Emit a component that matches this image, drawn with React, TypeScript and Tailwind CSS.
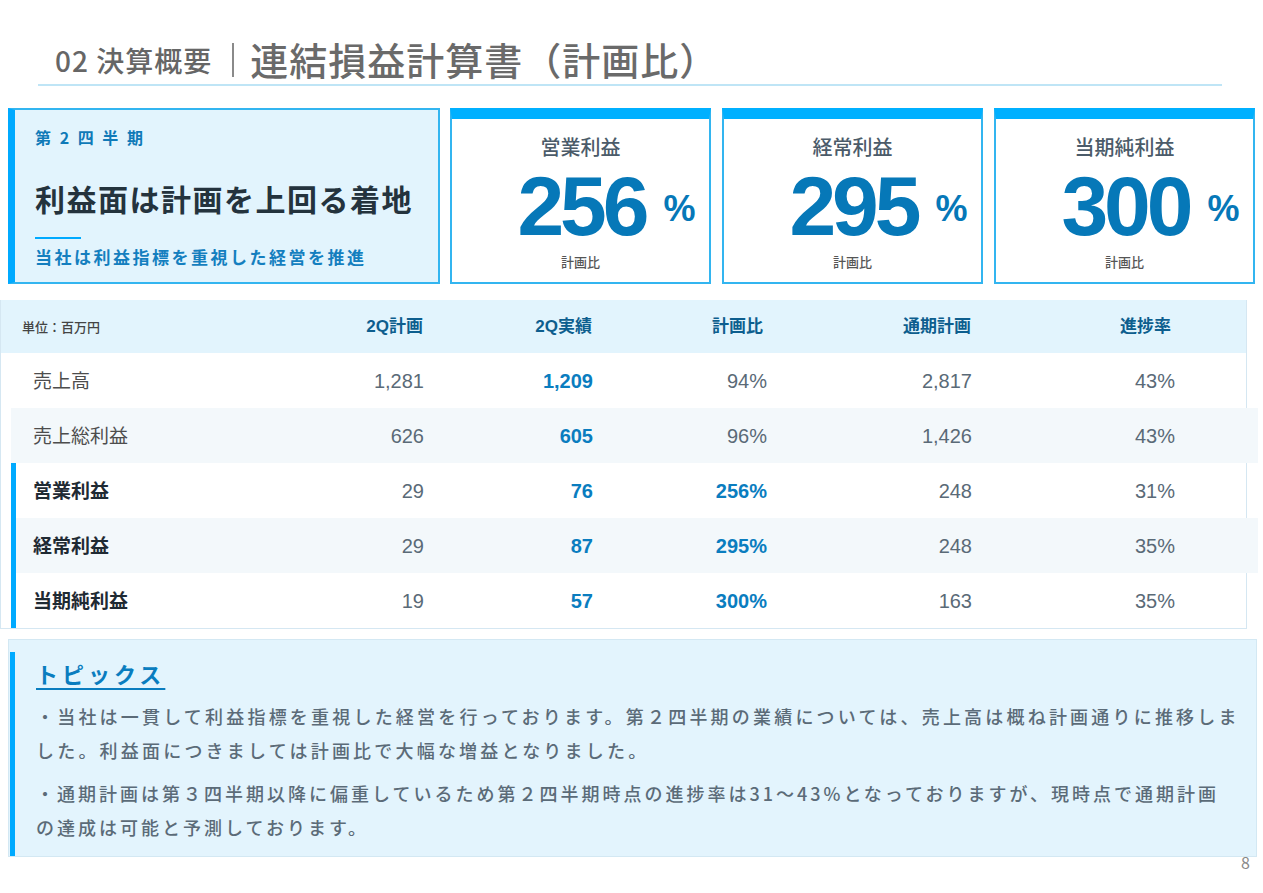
const JP = "font-['Noto_Sans_CJK_JP',sans-serif]"
const NUM = "font-['Liberation_Sans','Noto_Sans_CJK_JP',sans-serif]"

type Row = {
  label: string
  plan: string
  actual: string
  ratio: string
  full: string
  progress: string
  key: boolean
  striped: boolean
}

const rows: Row[] = [
  { label: '売上高', plan: '1,281', actual: '1,209', ratio: '94%', full: '2,817', progress: '43%', key: false, striped: false },
  { label: '売上総利益', plan: '626', actual: '605', ratio: '96%', full: '1,426', progress: '43%', key: false, striped: true },
  { label: '営業利益', plan: '29', actual: '76', ratio: '256%', full: '248', progress: '31%', key: true, striped: false },
  { label: '経常利益', plan: '29', actual: '87', ratio: '295%', full: '248', progress: '35%', key: true, striped: true },
  { label: '当期純利益', plan: '19', actual: '57', ratio: '300%', full: '163', progress: '35%', key: true, striped: false },
]

const metrics = [
  { label: '営業利益', value: '256' },
  { label: '経常利益', value: '295' },
  { label: '当期純利益', value: '300' },
]

function MetricCard({ label, value }: { label: string; value: string }) {
  return (
    <div className="w-[261px] h-[176px] border-2 border-t-[11px] border-[#33b5f0] border-t-[#00b0ff] bg-white flex flex-col items-center">
      <div className={`${JP} mt-[14px] text-[20px] leading-[28px] font-medium text-[#4b5b69]`}>{label}</div>
      <div className="mt-[7px] w-full pl-[52px] flex justify-center items-center">
        <span className={`${NUM} text-[84px] leading-[76px] font-bold tracking-[-4px] text-[#0678b8]`}>{value}</span>
        <span className={`${NUM} ml-[18px] mt-[6px] text-[36px] leading-[36px] font-bold text-[#0678b8]`}>%</span>
      </div>
      <div className={`${JP} mt-[8px] text-[13px] leading-[20px] font-medium text-[#555]`}>計画比</div>
    </div>
  )
}

export default function App() {
  return (
    <div className={`${JP} w-[1263px] h-[893px] bg-white overflow-hidden`}>
      {/* Title */}
      <div className="ml-[38px] w-[1184px] pt-[33px] border-b-2 border-[#bfe5f6]">
        <div className="flex items-center pl-[17px]">
          <span className="text-[28px] leading-[47px] font-medium text-[#666] tracking-[1px] pt-[4px]">02 決算概要</span>
          <span className="ml-[20px] mr-[16px] mt-[2px] w-[2px] h-[34px] bg-[#8a8a8a]" />
          <span className="text-[38px] leading-[47px] font-medium text-[#6a6a6a] tracking-[1px]">連結損益計算書（計画比）</span>
        </div>
      </div>

      {/* Summary cards */}
      <div className="mt-[22px] ml-[8px] flex">
        <div className="w-[432px] h-[176px] bg-[#e2f4fd] border-2 border-l-[7px] border-[#33b5f0] border-l-[#00aaff] pl-[20px] pt-[15px]">
          <div className="text-[16px] leading-[24px] font-bold text-[#0f7ab8] tracking-[2.5px]">第 2 四 半 期</div>
          <div className="mt-[29px] text-[30px] leading-[40px] font-bold text-[#24333d] tracking-[1.5px]">利益面は計画を上回る着地</div>
          <div className="mt-[19px] w-[46px] h-[2px] bg-[#00aaff]" />
          <div className="mt-[5px] text-[17px] leading-[26px] font-bold text-[#147fbf] tracking-[2.5px]">当社は利益指標を重視した経営を推進</div>
        </div>
        <div className="ml-[10px] flex gap-[11px]">
          {metrics.map((m) => (
            <MetricCard key={m.label} label={m.label} value={m.value} />
          ))}
        </div>
      </div>

      {/* Table */}
      <div className="mt-[16px] w-[1247px] border-l border-r border-b border-[#d5e7f2]">
        <div className="h-[53px] bg-[#e2f4fd] grid grid-cols-[252px_170px_169px_174px_205px_203px_1fr] items-center">
          <div className="pl-[21px] text-[13px] font-medium text-[#444]">単位：百万円</div>
          {['2Q計画', '2Q実績', '計画比', '通期計画', '進捗率'].map((h, i) => (
            <div
              key={h}
              className={`${NUM} text-right text-[17px] font-bold text-[#0d5e8e] ${i === 2 || i === 4 ? 'pr-[3px]' : ''}`}
            >
              {h}
            </div>
          ))}
          <div />
        </div>
        {rows.map((r) => (
          <div
            key={r.label}
            className={`ml-[10px] w-[1247px] h-[55px] grid grid-cols-[243px_170px_169px_174px_205px_203px_1fr] items-center ${
              r.striped ? 'bg-[#f3f8fb]' : ''
            } ${r.key ? 'shadow-[inset_5px_0_0_#00aaff]' : ''}`}
          >
            <div
              className={`pl-[22px] text-[19px] ${r.key ? 'font-bold text-[#1f2a33]' : 'font-normal text-[#4d4d4d]'}`}
            >
              {r.label}
            </div>
            <div className={`${NUM} text-right text-[20px] text-[#5a6a77]`}>{r.plan}</div>
            <div className={`${NUM} text-right text-[20px] font-bold text-[#0a7dbf]`}>{r.actual}</div>
            <div
              className={`${NUM} text-right text-[20px] ${r.key ? 'font-bold text-[#0a7dbf]' : 'text-[#5a6a77]'}`}
            >
              {r.ratio}
            </div>
            <div className={`${NUM} text-right text-[20px] text-[#5a6a77]`}>{r.full}</div>
            <div className={`${NUM} text-right text-[20px] text-[#5a6a77]`}>{r.progress}</div>
            <div />
          </div>
        ))}
      </div>

      {/* Topics */}
      <div className="mt-[10px] ml-[8px] w-[1249px] h-[218px] bg-[#e3f4fd] border border-[#d3e8f3]">
        <div className="mt-[12px] ml-[1px] h-[204px] border-l-[5px] border-[#00aaff] pl-[21px]">
          <div className="pt-[6px] text-[22px] leading-[30px] font-bold text-[#0a7dbf] tracking-[4px] underline underline-offset-[5px] decoration-2 decoration-[#0a7dbf] inline-block">
            トピックス
          </div>
          <div className="mt-[11px] text-[18px] leading-[34px] font-medium text-[#5b6b78] tracking-[3.2px] whitespace-nowrap">
            ・当社は一貫して利益指標を重視した経営を行っております。第２四半期の業績については、売上高は概ね計画通りに推移しま
            <br />
            した。利益面につきましては計画比で大幅な増益となりました。
          </div>
          <div className="mt-[9px] text-[18px] leading-[34px] font-medium text-[#5b6b78] tracking-[3px] whitespace-nowrap">
            ・通期計画は第３四半期以降に偏重しているため第２四半期時点の進捗率は31〜43%となっておりますが、現時点で通期計画
            <br />
            の達成は可能と予測しております。
          </div>
        </div>
      </div>

      <div className="-mt-[3px] flex justify-end pr-[13px] text-[16px] leading-[16px] text-[#888]">8</div>
    </div>
  )
}
